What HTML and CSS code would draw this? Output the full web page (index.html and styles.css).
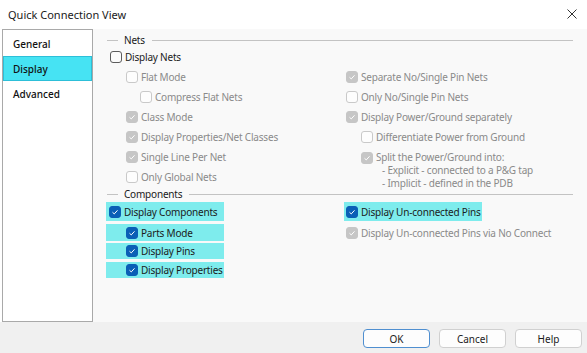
FILE: index.html
```html
<!DOCTYPE html>
<html lang="en">
<head>
  <meta charset="UTF-8">
  <title>Quick Connection View</title>
  <link rel="stylesheet" href="styles.css">
</head>
<body>
  <div class="titlebar">
    <span class="title">Quick Connection View</span>
    <svg class="close" width="10" height="10" viewBox="0 0 10 10"><path d="M0.5 0.5L9.5 9.5M9.5 0.5L0.5 9.5" stroke="#333" stroke-width="1"/></svg>
  </div>

  <div class="main">
    <div class="sidebar">
      <div class="tab">General</div>
      <div class="tab active">Display</div>
      <div class="tab">Advanced</div>
    </div>

    <div class="content">
      <div class="legend"><span class="line short"></span><span class="legend-text">Nets</span><span class="line"></span></div>
      <div class="row lvl0"><span class="cb"></span>Display Nets</div>
      <div class="cols">
        <div class="col-left">
          <div class="row lvl1 off"><span class="cb"></span>Flat Mode</div>
          <div class="row lvl2 off"><span class="cb"></span>Compress Flat Nets</div>
          <div class="row lvl1 off"><span class="cb on"><svg viewBox="0 0 12 12"><path d="M3 6.3L5.1 8.3L9 4" /></svg></span>Class Mode</div>
          <div class="row lvl1 off"><span class="cb on"><svg viewBox="0 0 12 12"><path d="M3 6.3L5.1 8.3L9 4" /></svg></span>Display Properties/Net Classes</div>
          <div class="row lvl1 off"><span class="cb on"><svg viewBox="0 0 12 12"><path d="M3 6.3L5.1 8.3L9 4" /></svg></span>Single Line Per Net</div>
          <div class="row lvl1 off"><span class="cb"></span>Only Global Nets</div>
        </div>
        <div class="col-right">
          <div class="row rlvl0 off"><span class="cb on"><svg viewBox="0 0 12 12"><path d="M3 6.3L5.1 8.3L9 4" /></svg></span>Separate No/Single Pin Nets</div>
          <div class="row rlvl0 off"><span class="cb"></span>Only No/Single Pin Nets</div>
          <div class="row rlvl0 off"><span class="cb on"><svg viewBox="0 0 12 12"><path d="M3 6.3L5.1 8.3L9 4" /></svg></span>Display Power/Ground separately</div>
          <div class="row rlvl1 off"><span class="cb"></span>Differentiate Power from Ground</div>
          <div class="row rlvl1 off multi">
            <span class="cb on"><svg viewBox="0 0 12 12"><path d="M3 6.3L5.1 8.3L9 4" /></svg></span>
            <div class="lines">
              <div>Split the Power/Ground into:</div>
              <div class="sub">- Explicit - connected to a P&amp;G tap</div>
              <div class="sub">- Implicit - defined in the PDB</div>
            </div>
          </div>
        </div>
      </div>

      <div class="legend"><span class="line short"></span><span class="legend-text">Components</span><span class="line"></span></div>
      <div class="cols">
        <div class="col-left">
          <div class="hl h1 clvl0"><span class="cb sel"><svg viewBox="0 0 12 12"><path d="M3 6.3L5.1 8.3L9 4" /></svg></span>Display Components</div>
          <div class="hl h2 clvl1"><span class="cb sel"><svg viewBox="0 0 12 12"><path d="M3 6.3L5.1 8.3L9 4" /></svg></span>Parts Mode</div>
          <div class="hl h3 clvl1"><span class="cb sel"><svg viewBox="0 0 12 12"><path d="M3 6.3L5.1 8.3L9 4" /></svg></span>Display Pins</div>
          <div class="hl h4 clvl1"><span class="cb sel"><svg viewBox="0 0 12 12"><path d="M3 6.3L5.1 8.3L9 4" /></svg></span>Display Properties</div>
        </div>
        <div class="col-right">
          <div class="hl h1 wide"><span class="cb sel"><svg viewBox="0 0 12 12"><path d="M3 6.3L5.1 8.3L9 4" /></svg></span>Display Un-connected Pins</div>
          <div class="row h2 rlvl0 off"><span class="cb on"><svg viewBox="0 0 12 12"><path d="M3 6.3L5.1 8.3L9 4" /></svg></span>Display Un-connected Pins via No Connect</div>
        </div>
      </div>
    </div>
  </div>

  <div class="footer">
    <button class="btn default">OK</button>
    <button class="btn">Cancel</button>
    <button class="btn">Help</button>
  </div>
</body>
</html>
```

FILE: styles.css
```css
body {
  margin: 0;
  width: 587px;
  height: 353px;
  overflow: hidden;
  font-family: "Noto Sans", "Open Sans", sans-serif;
  font-size: 10px;
  letter-spacing: -0.2px;
  color: #1b1b1b;
  background-color: #fff;
}
.titlebar {
  height: 29px;
  display: flex;
  align-items: center;
  justify-content: space-between;
  padding: 0 10px 1px 8px;
  box-sizing: border-box;
}
.title {
  font-size: 11px;
  letter-spacing: 0;
  color: #1a1a1a;
}
.main {
  display: flex;
  height: 293px;
}
.sidebar {
  margin-left: 2px;
  width: 91px;
  box-sizing: border-box;
  border: 1px solid #a9a9a9;
  background-color: #fff;
  padding-top: 1px;
}
.tab {
  height: 25px;
  box-sizing: border-box;
  display: flex;
  align-items: center;
  padding-left: 10px;
  color: #111;
  font-weight: 500;
  letter-spacing: 0;
}
.tab.active {
  background-color: #46e3f3;
  border: 1px solid #2dbfd8;
  padding-left: 9px;
}
.content {
  flex: 1;
  background-color: #f9f9f9;
  padding: 4px 14px 0 13px;
}
.legend {
  height: 14px;
  display: flex;
  align-items: center;
}
.line {
  flex: 1;
  height: 1px;
  background-color: #c3c3c3;
}
.line.short {
  flex: none;
  width: 11px;
  margin-left: 1px;
}
.legend-text {
  margin: 0 7px 0 6px;
  color: #1a1a1a;
}
.row {
  height: 20px;
  display: flex;
  align-items: center;
  white-space: nowrap;
}
.cols {
  display: flex;
}
.col-left {
  width: 238px;
}
.col-right {
  flex: 1;
}
.lvl0 { padding-left: 4px; }
.lvl1 { padding-left: 20px; }
.lvl2 { padding-left: 34px; }
.rlvl0 { padding-left: 2px; }
.rlvl1 { padding-left: 17px; }
.clvl0 { padding-left: 3px; }
.clvl1 { padding-left: 20px; }
.off {
  color: #8a8a8a;
}
.cb {
  width: 12px;
  height: 12px;
  box-sizing: border-box;
  border: 1px solid #5c5c5c;
  border-radius: 3px;
  margin-right: 3px;
  flex: none;
  background-color: #fbfbfb;
}
.off .cb {
  border-color: #c9c9c9;
  background-color: #fdfdfd;
}
.cb svg {
  display: block;
  width: 10px;
  height: 10px;
}
.cb svg path {
  fill: none;
  stroke: #fff;
  stroke-width: 1.2;
}
.off .cb.on {
  background-color: #c6c6c6;
  border-color: #c6c6c6;
}
.cb.sel {
  background-color: #0a5fb6;
  border-color: #0a5fb6;
}
.multi {
  height: 40px;
  box-sizing: border-box;
  align-items: flex-start;
  padding-top: 4px;
}
.multi .cb {
  margin-top: 1px;
}
.lines {
  line-height: 13px;
}
.sub {
  padding-left: 6px;
}
.hl {
  display: flex;
  align-items: center;
  width: 118px;
  box-sizing: border-box;
  background-color: #7eeced;
  white-space: nowrap;
}
.hl.wide {
  width: 138px;
  padding-left: 2px;
}
.h1 { height: 19px; margin-top: 1px; }
.h2 { height: 17px; margin-top: 3px; }
.h3 { height: 16px; margin-top: 2px; }
.h4 { height: 16px; margin-top: 3px; }
.footer {
  height: 31px;
  background-color: #f0f0f0;
  display: flex;
  justify-content: flex-end;
  gap: 9px;
  padding: 7px 5px 0 0;
  box-sizing: border-box;
}
.btn {
  width: 67px;
  height: 19px;
  padding: 0;
  font-family: "Noto Sans", "Open Sans", sans-serif;
  font-size: 10px;
  color: #1b1b1b;
  background-color: #fdfdfd;
  border: 1px solid #d0d0d0;
  border-radius: 4px;
}
.btn.default {
  border-color: #4f8fd0;
}
```
